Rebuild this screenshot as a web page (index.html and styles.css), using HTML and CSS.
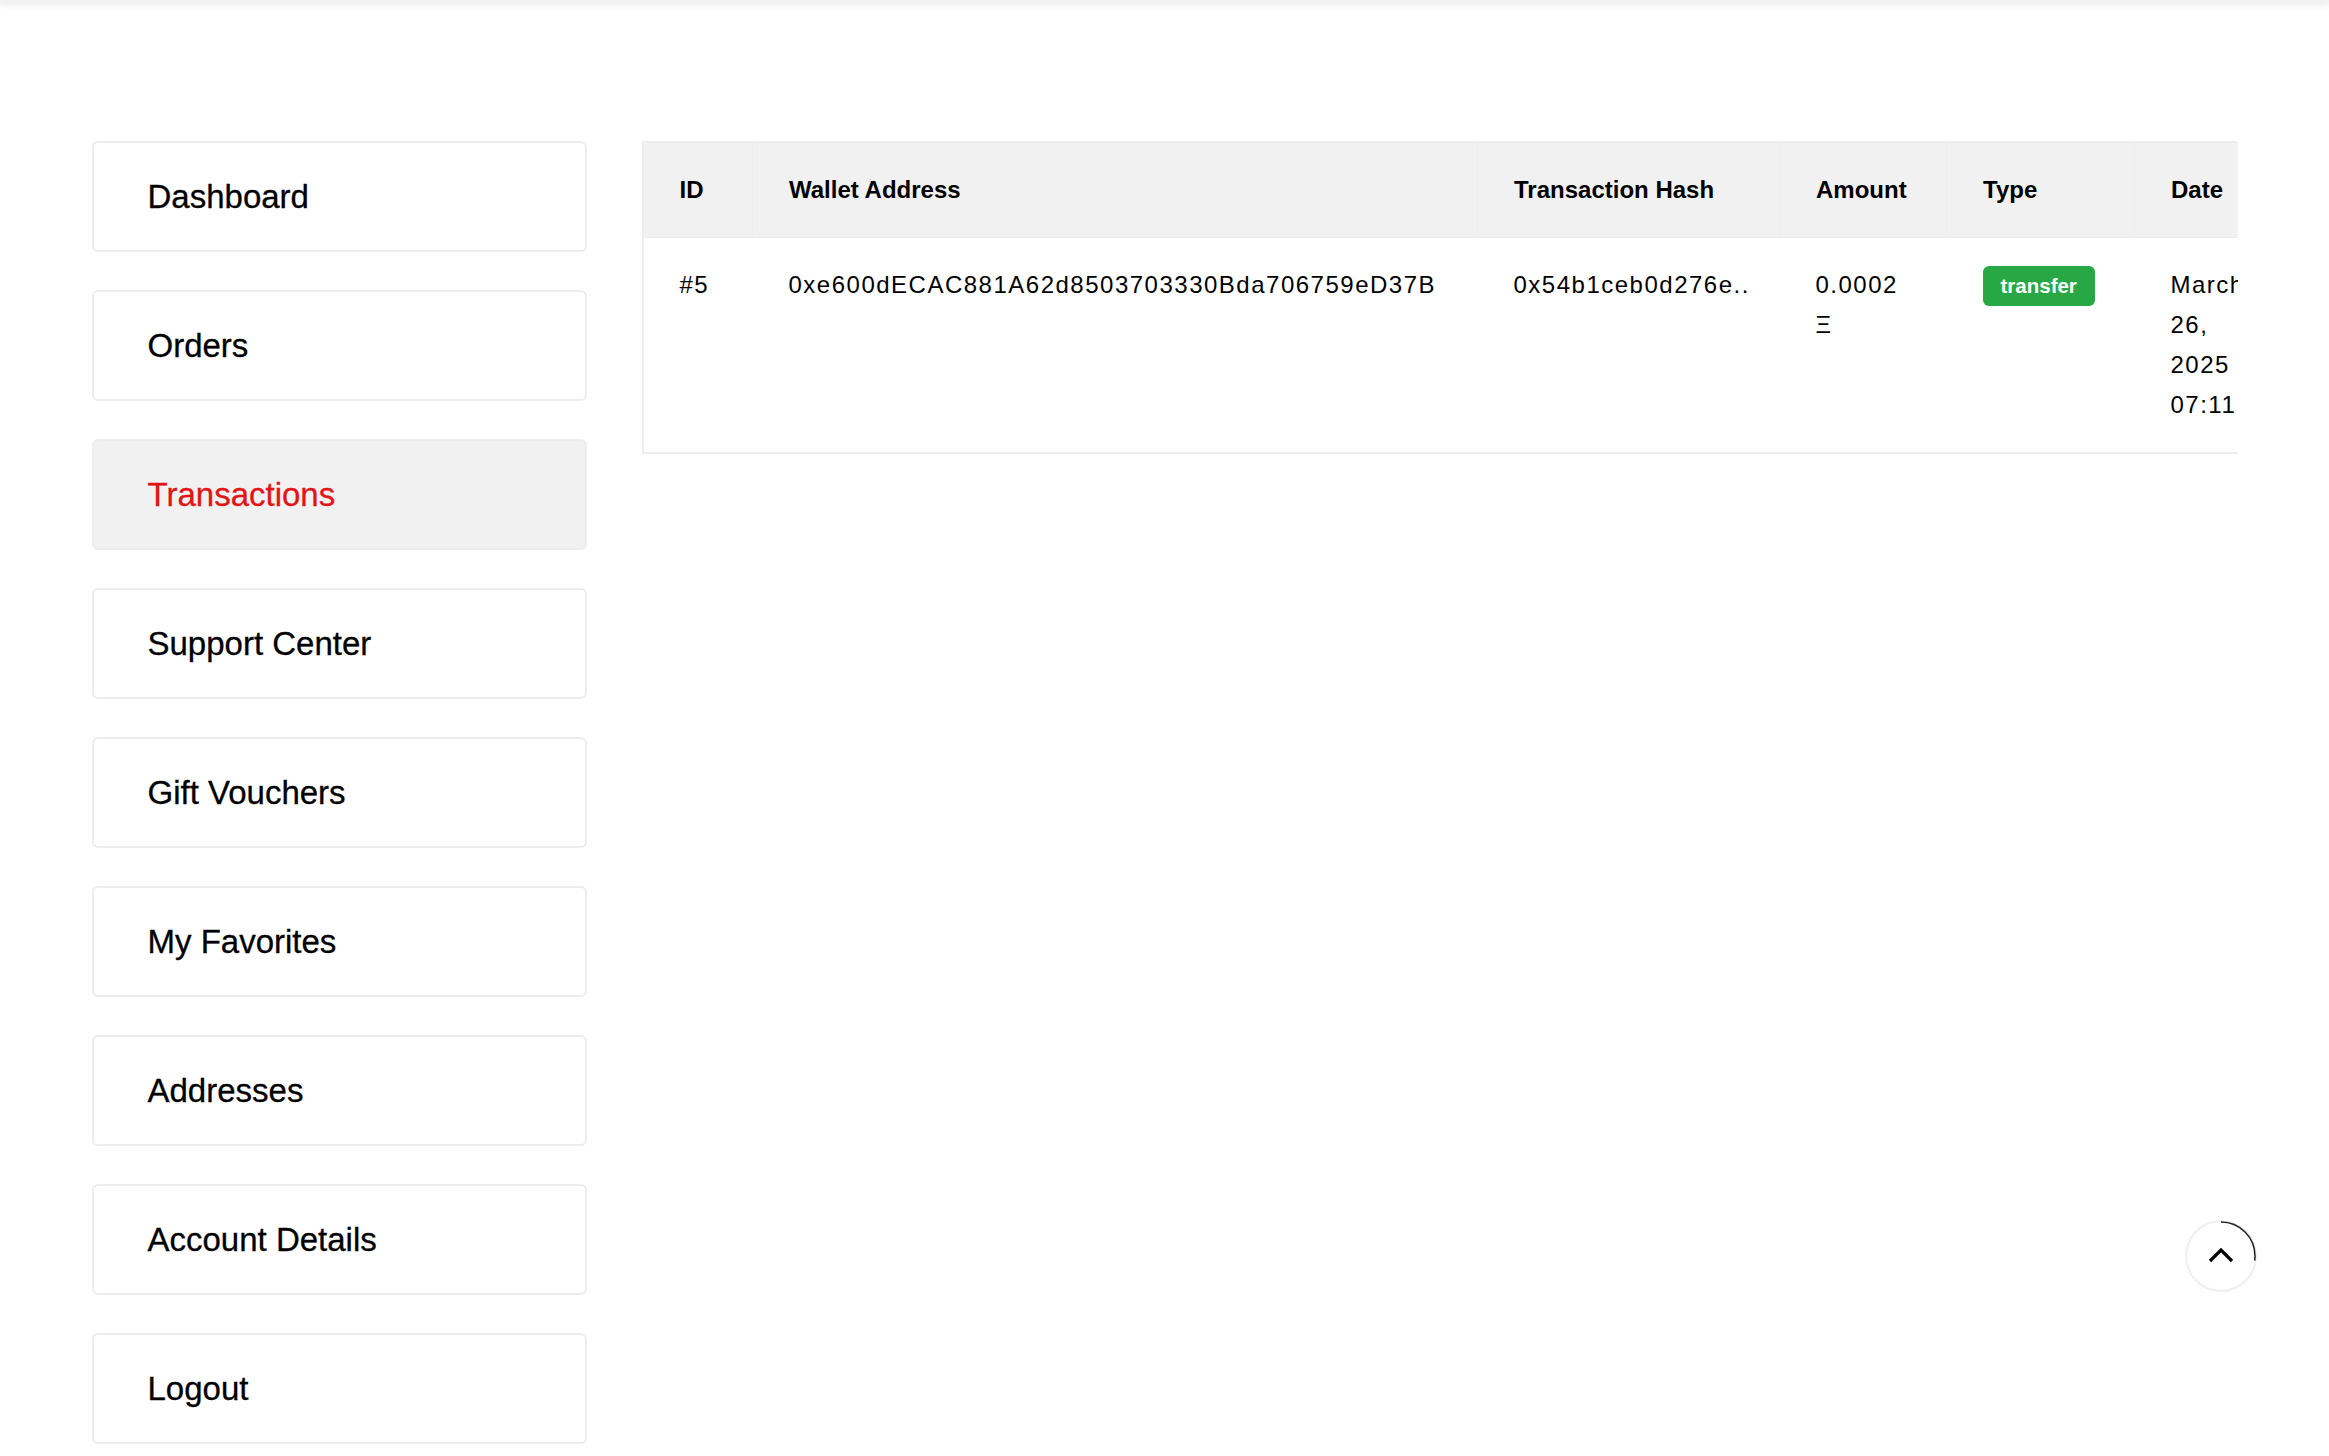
FILE: index.html
```html
<!DOCTYPE html>
<html lang="en">
<head>
    <meta charset="UTF-8">
    <meta name="viewport" content="width=device-width, initial-scale=1.0">
    <title>My Account - Transactions</title>
    <link rel="stylesheet" href="styles.css">
</head>
<body>
    <div class="top-shadow"></div>

    <div class="account-page">
        <ul class="account-nav">
            <li><a href="#">Dashboard</a></li>
            <li><a href="#">Orders</a></li>
            <li><a href="#" class="active">Transactions</a></li>
            <li><a href="#">Support Center</a></li>
            <li><a href="#">Gift Vouchers</a></li>
            <li><a href="#">My Favorites</a></li>
            <li><a href="#">Addresses</a></li>
            <li><a href="#">Account Details</a></li>
            <li><a href="#">Logout</a></li>
        </ul>

        <div class="account-content">
            <div class="table-wrap">
                <table class="tx-table">
                    <colgroup>
                        <col class="col-id">
                        <col class="col-wallet">
                        <col class="col-hash">
                        <col class="col-amount">
                        <col class="col-type">
                        <col class="col-date">
                    </colgroup>
                    <thead>
                        <tr>
                            <th>ID</th>
                            <th>Wallet Address</th>
                            <th>Transaction Hash</th>
                            <th>Amount</th>
                            <th>Type</th>
                            <th>Date</th>
                        </tr>
                    </thead>
                    <tbody>
                        <tr>
                            <td>#5</td>
                            <td>0xe600dECAC881A62d8503703330Bda706759eD37B</td>
                            <td>0x54b1ceb0d276e..</td>
                            <td>0.0002 Ξ</td>
                            <td><span class="badge">transfer</span></td>
                            <td>March 26, 2025 07:11</td>
                        </tr>
                    </tbody>
                </table>
            </div>
        </div>
    </div>

    <!-- scroll to top -->
    <button class="scroll-top" aria-label="Back to top">
        <svg width="72" height="72" viewBox="0 0 72 72">
            <circle cx="36" cy="36" r="34" fill="none" stroke="#1f1f1f" stroke-width="1.5"
                    stroke-dasharray="58 200" transform="rotate(-90 36 36)"/>
            <polyline points="25,41 36,30 47,41" fill="none" stroke="#000" stroke-width="3.2"/>
        </svg>
    </button>
</body>
</html>
```

FILE: styles.css
```css
body {
    margin: 0;
    padding: 0;
    background-color: #fff;
    color: #000;
    font-family: "Liberation Sans", Arial, sans-serif;
}

.top-shadow {
    height: 0;
    box-shadow: 0 0 8px 3px rgba(0, 0, 0, 0.12);
}

.account-page {
    width: 2146px;
    margin: 0 auto;
    padding-top: 141px;
    display: flex;
    gap: 55px;
    align-items: flex-start;
}

/* sidebar */
.account-nav {
    list-style: none;
    margin: 0;
    padding: 0;
    width: 495px;
    flex-shrink: 0;
}

.account-nav li {
    margin-bottom: 38px;
}

.account-nav a {
    display: flex;
    align-items: center;
    height: 107px;
    padding: 0 54px;
    border: 2px solid #ededed;
    border-radius: 6px;
    color: #000;
    text-decoration: none;
    font-size: 33px;
    -webkit-text-stroke: 0.3px #000;
}

.account-nav a.active {
    background-color: #f1f1f1;
    color: #e31414;
    -webkit-text-stroke: 0.3px #e31414;
}

/* table */
.account-content {
    flex: 1;
    min-width: 0;
}

.table-wrap {
    overflow: hidden;
}

.tx-table {
    width: 1662px;
    table-layout: fixed;
    border-collapse: collapse;
    border: 2px solid #eeeeee;
}

.col-id { width: 110px; }
.col-wallet { width: 725px; }
.col-hash { width: 302px; }
.col-amount { width: 167px; }
.col-type { width: 188px; }
.col-date { width: 170px; }

.tx-table th,
.tx-table td {
    padding: 27px 36px;
    text-align: left;
    vertical-align: top;
    line-height: 40px;
    font-size: 24px;
}

.tx-table th {
    background-color: #f1f1f1;
    font-weight: bold;
    border-right: 1px solid #eeeeee;
    border-bottom: 1px solid #ececec;
}

.tx-table td {
    letter-spacing: 1.5px;
}

.badge {
    display: inline-block;
    background-color: #28a745;
    color: #fff;
    font-size: 20.5px;
    font-weight: bold;
    letter-spacing: 0;
    line-height: 40px;
    padding: 0 18px;
    border-radius: 6px;
}

/* back to top */
.scroll-top {
    position: fixed;
    right: 72px;
    bottom: 164px;
    width: 72px;
    height: 72px;
    padding: 0;
    border: 2px solid #efefef;
    border-radius: 50%;
    background-color: #fff;
    cursor: pointer;
}

.scroll-top svg {
    position: absolute;
    left: -2px;
    top: -2px;
}
```
